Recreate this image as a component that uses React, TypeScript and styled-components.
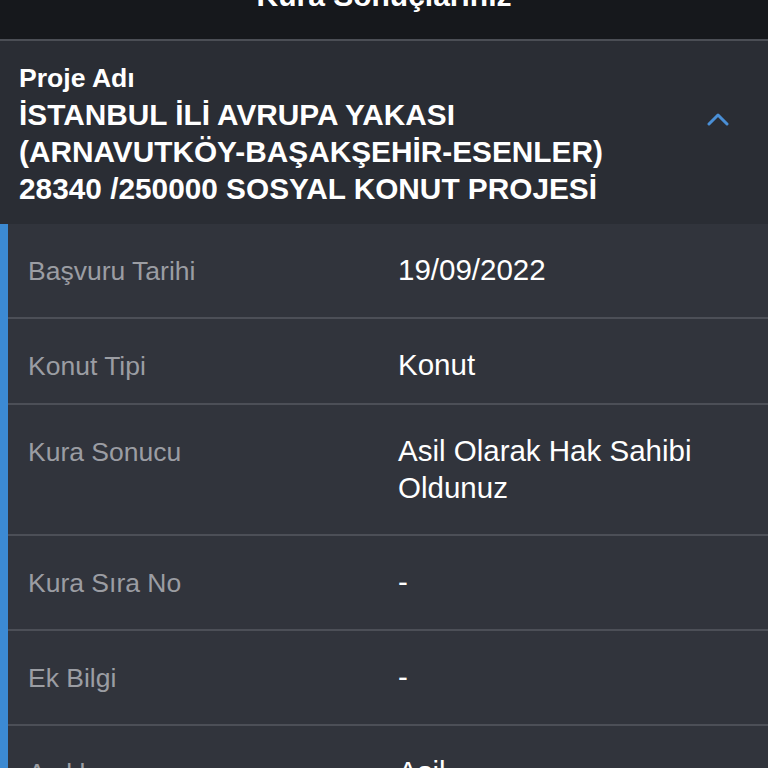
import * as React from 'react';
import styled, { createGlobalStyle } from 'styled-components';


interface Detail {
    label: string
    value: string
    bottom?: number
}


const details: Array<Detail> = [
    { label: 'Başvuru Tarihi', value: '19/09/2022' },
    { label: 'Konut Tipi', value: 'Konut', bottom: 18 },
    { label: 'Kura Sonucu', value: 'Asil Olarak Hak Sahibi Oldunuz', bottom: 28 },
    { label: 'Kura Sıra No', value: '-' },
    { label: 'Ek Bilgi', value: '-' },
    { label: 'Açıklama', value: 'Asil' },
];


const GlobalStyle = createGlobalStyle`
  html, body {
    margin: 0;
    padding: 0;
    background: #31343c;
    font-family: "Liberation Sans", Arial, Helvetica, sans-serif;
    -webkit-font-smoothing: antialiased;
  }
`;

const Page = styled.div`
  width: 768px;
  height: 768px;
  overflow: hidden;
  background: #31343c;
`;

const Header = styled.header`
  height: 39px;
  overflow: hidden;
  background: #16181c;
  border-bottom: 2px solid #4b4e55;
  display: flex;
  justify-content: center;
`;

const HeaderTitle = styled.h1`
  margin: -19px 0 0;
  font-size: 30px;
  line-height: 30px;
  font-weight: 700;
  color: #ffffff;
`;

const Project = styled.section`
  display: flex;
  align-items: flex-start;
  background: #2a2d34;
  padding: 21px 38px 17px 19px;
`;

const ProjectText = styled.div`
  flex: 1;
  color: #ffffff;
  font-weight: 700;
`;

const ProjectLabel = styled.div`
  font-size: 26.6px;
  line-height: 32px;
`;

const ProjectName = styled.div`
  margin-top: 2px;
  font-size: 29.8px;
  line-height: 37px;
`;

const Chevron = styled.svg`
  width: 24px;
  height: 14px;
  margin-top: 50px;
  flex-shrink: 0;
`;

const Details = styled.div`
  border-left: 8px solid #3c8ad2;
`;

const Row = styled.div<{ bottom?: number }>`
  display: grid;
  grid-template-columns: 370px 1fr;
  align-items: baseline;
  padding: 27px 24px ${p => p.bottom ?? 27}px 20px;
  border-bottom: 2px solid #4c4f57;
`;

const Label = styled.div`
  font-size: 26.5px;
  line-height: 37px;
  color: #9b9da3;
`;

const Value = styled.div`
  font-size: 29.5px;
  line-height: 37px;
  color: #ffffff;
`;


export default function App() {
    return (
        <Page>
            <GlobalStyle />
            <Header>
                <HeaderTitle>Kura Sonuçlarınız</HeaderTitle>
            </Header>
            <Project>
                <ProjectText>
                    <ProjectLabel>Proje Adı</ProjectLabel>
                    <ProjectName>
                        İSTANBUL İLİ AVRUPA YAKASI<br />
                        (ARNAVUTKÖY-BAŞAKŞEHİR-ESENLER)<br />
                        28340 /250000 SOSYAL KONUT PROJESİ
                    </ProjectName>
                </ProjectText>
                <Chevron viewBox="0 0 24 14">
                    <polyline points="3,12 12,3 21,12" fill="none" stroke="#4a8fd6" strokeWidth="3" strokeLinecap="round" strokeLinejoin="round" />
                </Chevron>
            </Project>
            <Details>
                {details.map(d => (
                    <Row key={d.label} bottom={d.bottom}>
                        <Label>{d.label}</Label>
                        <Value>{d.value}</Value>
                    </Row>
                ))}
            </Details>
        </Page>
    );
}
